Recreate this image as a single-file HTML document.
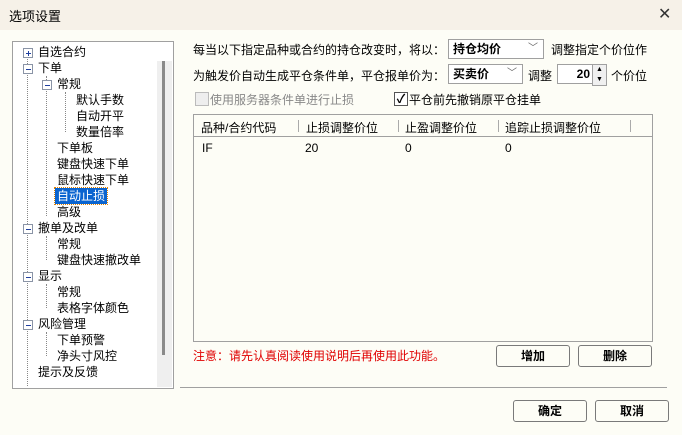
<html><head><style>
body{margin:0;width:682px;height:435px;background:#fdfdf6;font-family:"Liberation Sans","Noto Sans CJK SC","WenQuanYi Zen Hei",sans-serif;font-size:12px;color:#000;position:relative;overflow:hidden}
.a{position:absolute;white-space:nowrap}
.t{line-height:16px}
.bx{position:absolute;width:8px;height:8px;border:1px solid #8a94a6;background:#fff}
.bx:after{content:"";position:absolute;left:2px;top:4px;width:5px;height:1px;background:#2040a0}
.p:before{content:"";position:absolute;left:4px;top:2px;width:1px;height:5px;background:#2040a0}
.vl{position:absolute;border-left:1px dotted #888}
.hl{position:absolute;border-top:1px dotted #888;height:0}
.btn{position:absolute;border:1px solid #7a7a7a;border-radius:3px;background:#fdfdf6;text-align:center;font-weight:bold;line-height:20px;height:20px}
.cb{position:absolute;border:1px solid #a0a0a0;background:#fff;height:18px;line-height:18px;font-weight:bold}
</style></head><body>
<div class="a" style="left:0;top:0;width:682px;height:30px;background:#f6f1e8"></div>
<div class="a" style="left:9px;top:6px;font-size:13px">选项设置</div>
<div class="a" style="left:658px;top:4px;font-size:16px;color:#333">✕</div>

<div class="a" style="left:12px;top:41px;width:160px;height:346px;border:1px solid #a0a0a0;background:#fff"></div>
<div class="a" style="left:157px;top:61px;width:15px;height:326px;background:#efefef"></div>
<div class="a" style="left:162px;top:61px;width:3px;height:294px;background:#8a8a8a"></div>
<div class="vl" style="left:27px;top:56px;height:330px"></div>
<div class="vl" style="left:46px;top:76px;height:140px"></div>
<div class="vl" style="left:65px;top:92px;height:40px"></div>
<div class="vl" style="left:46px;top:236px;height:24px"></div>
<div class="vl" style="left:46px;top:284px;height:24px"></div>
<div class="vl" style="left:46px;top:332px;height:24px"></div>
<div class="bx p" style="left:23px;top:48px"></div>
<div class="bx" style="left:23px;top:64px"></div>
<div class="bx" style="left:42px;top:80px"></div>
<div class="bx" style="left:23px;top:224px"></div>
<div class="bx" style="left:23px;top:272px"></div>
<div class="bx" style="left:23px;top:320px"></div>
<div class="a t" style="left:38px;top:44px">自选合约</div>
<div class="a t" style="left:38px;top:60px">下单</div>
<div class="a t" style="left:57px;top:76px">常规</div>
<div class="a t" style="left:76px;top:92px">默认手数</div>
<div class="a t" style="left:76px;top:108px">自动开平</div>
<div class="a t" style="left:76px;top:124px">数量倍率</div>
<div class="a t" style="left:57px;top:140px">下单板</div>
<div class="a t" style="left:57px;top:156px">键盘快速下单</div>
<div class="a t" style="left:57px;top:172px">鼠标快速下单</div>
<div class="a t" style="left:55px;top:188px;background:#0a64d0;color:#fff;padding:0 2px;outline:1px dotted #e08000">自动止损</div>
<div class="a t" style="left:57px;top:204px">高级</div>
<div class="a t" style="left:38px;top:220px">撤单及改单</div>
<div class="a t" style="left:57px;top:236px">常规</div>
<div class="a t" style="left:57px;top:252px">键盘快速撤改单</div>
<div class="a t" style="left:38px;top:268px">显示</div>
<div class="a t" style="left:57px;top:284px">常规</div>
<div class="a t" style="left:57px;top:300px">表格字体颜色</div>
<div class="a t" style="left:38px;top:316px">风险管理</div>
<div class="a t" style="left:57px;top:332px">下单预警</div>
<div class="a t" style="left:57px;top:348px">净头寸风控</div>
<div class="a t" style="left:38px;top:364px">提示及反馈</div>

<div class="a" style="left:193px;top:41px">每当以下指定品种或合约的持仓改变时，将以：</div>
<div class="cb" style="left:448px;top:39px;width:94px"><span style="margin-left:4px">持仓均价</span><span style="position:absolute;right:5px;top:0;font-weight:normal;color:#666;font-size:10px">﹀</span></div>
<div class="a" style="left:551px;top:41px">调整指定个价位作</div>
<div class="a" style="left:193px;top:67px">为触发价自动生成平仓条件单，平仓报单价为：</div>
<div class="cb" style="left:448px;top:64px;width:73px"><span style="margin-left:4px">买卖价</span><span style="position:absolute;right:5px;top:0;font-weight:normal;color:#666;font-size:10px">﹀</span></div>
<div class="a" style="left:528px;top:67px">调整</div>
<div class="cb" style="left:557px;top:64px;width:32px;text-align:right;padding-right:3px">20</div>
<div class="a" style="left:592px;top:64px;width:13px;height:20px;border:1px solid #a0a0a0;background:#f0f0f0;font-size:7px;line-height:10px;text-align:center">▲<br>▼</div>
<div class="a" style="left:611px;top:67px">个价位</div>
<div class="a" style="left:195px;top:92px;width:12px;height:12px;border:1px solid #bbb;background:#eee"></div>
<div class="a" style="left:210px;top:91px;color:#888">使用服务器条件单进行止损</div>
<div class="a" style="left:394px;top:92px;width:12px;height:12px;border:1px solid #555;background:#fff;font-size:12px;line-height:12px;text-align:center;font-weight:bold">✓</div>
<div class="a" style="left:409px;top:91px">平仓前先撤销原平仓挂单</div>

<div class="a" style="left:193px;top:114px;width:458px;height:226px;border:1px solid #a0a0a0;background:#fdfdf6"></div>
<div class="a" style="left:194px;top:136px;width:458px;height:1px;background:#a0a0a0"></div>
<div class="a" style="left:201px;top:119px">品种/合约代码</div>
<div class="a" style="left:298px;top:120px;width:1px;height:12px;background:#aaa"></div>
<div class="a" style="left:306px;top:119px">止损调整价位</div>
<div class="a" style="left:398px;top:120px;width:1px;height:12px;background:#aaa"></div>
<div class="a" style="left:405px;top:119px">止盈调整价位</div>
<div class="a" style="left:498px;top:120px;width:1px;height:12px;background:#aaa"></div>
<div class="a" style="left:505px;top:119px">追踪止损调整价位</div>
<div class="a" style="left:630px;top:120px;width:1px;height:12px;background:#aaa"></div>
<div class="a" style="left:202px;top:141px">IF</div>
<div class="a" style="left:305px;top:141px">20</div>
<div class="a" style="left:405px;top:141px">0</div>
<div class="a" style="left:505px;top:141px">0</div>

<div class="a" style="left:193px;top:347px;color:#e00000">注意：请先认真阅读使用说明后再使用此功能。</div>
<div class="btn" style="left:496px;top:345px;width:72px">增加</div>
<div class="btn" style="left:578px;top:345px;width:72px">删除</div>
<div class="a" style="left:180px;top:387px;width:487px;height:1px;background:#a0a0a0"></div>
<div class="btn" style="left:513px;top:400px;width:72px">确定</div>
<div class="btn" style="left:595px;top:400px;width:72px">取消</div>
</body></html>
